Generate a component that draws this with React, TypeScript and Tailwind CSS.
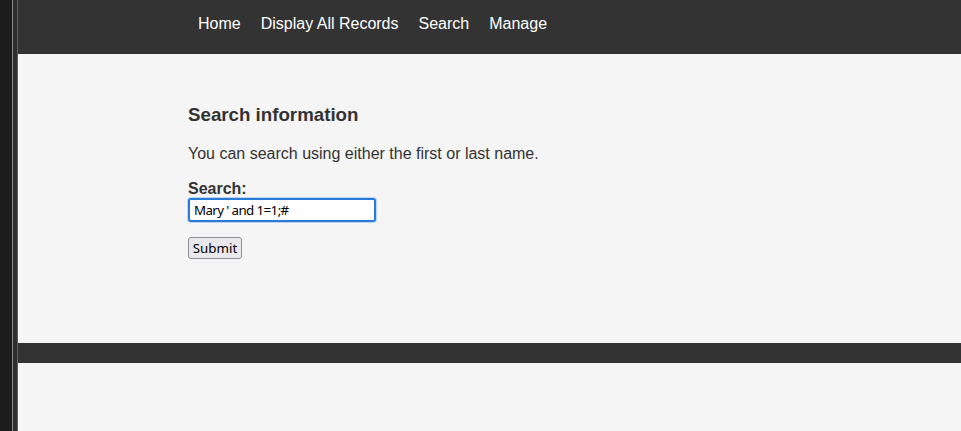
import React from 'react';

const links = ['Home', 'Display All Records', 'Search', 'Manage'];

const App = () => {
  const query = "Mary ' and 1=1;#";

  return (
    <div className="flex h-[431px] w-[961px] overflow-hidden bg-[#f5f5f5] font-['Liberation_Sans',Arial,sans-serif]">
      {/* window edge on the left */}
      <div className="w-[12px] bg-[#1c1c1c]" />
      <div className="w-px bg-[#8a8a8a]" />
      <div className="w-[4px] bg-[#2e2e2e]" />
      <div className="w-px bg-[#5e5e5e]" />

      <div className="flex flex-1 flex-col">
        <header className="h-[54px] bg-[#333333]">
          <nav className="flex pl-[170px] pt-[15px]">
            {links.map((l) => (
              <a key={l} href="#" className="px-[10px] text-[16px] leading-[18px] text-white">
                {l}
              </a>
            ))}
          </nav>
        </header>

        <main className="h-[289px] pl-[170px] pt-[50px] text-[#333333]">
          <h3 className="text-[18.72px] font-bold leading-[21px]">Search information</h3>
          <p className="mt-[20px] text-[16px] leading-[18px]">You can search using either the first or last name.</p>
          <form className="mt-[16px]" onSubmit={(e) => e.preventDefault()}>
            <label className="block text-[16px] font-bold leading-[19px]">Search:</label>
            <input
              type="text"
              defaultValue={query}
              autoFocus
              onFocus={(e) => e.currentTarget.setSelectionRange(query.length, query.length)}
              className="block h-[24px] w-[188px] rounded-[3px] border-2 border-[#2a7ad8] bg-white px-[4px] font-['Noto_Sans',sans-serif] text-[13.33px] tracking-[-0.6px] text-black shadow-[0_0_0_1px_#b9d6f7] outline-none"
            />
            <button
              type="submit"
              className="mt-[15px] block h-[22px] w-[54px] rounded-[3px] border border-[#8f8f9d] bg-[#e9e9ed] font-['Noto_Sans',sans-serif] text-[13.33px] leading-[18px] text-black"
            >
              Submit
            </button>
          </form>
        </main>

        <footer className="h-[20px] bg-[#333333]" />
      </div>
    </div>
  );
};

export default App;
